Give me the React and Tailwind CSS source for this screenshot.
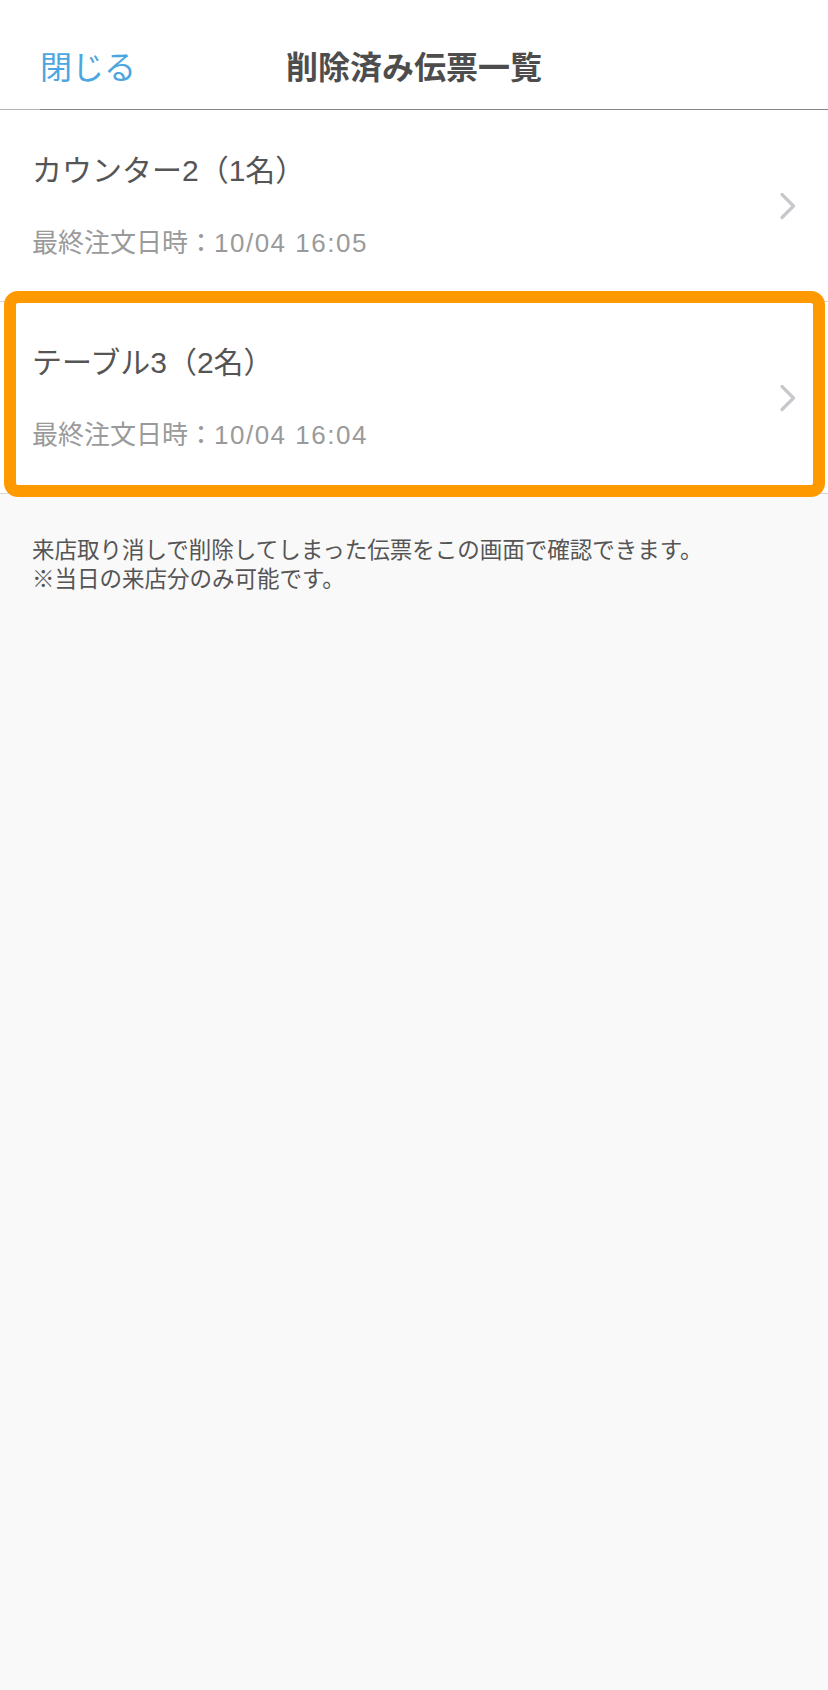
const rows = [
  { id: 1, name: "カウンター2（1名）", last: "10/04 16:05", highlighted: false },
  { id: 2, name: "テーブル3（2名）", last: "10/04 16:04", highlighted: true },
];

function Chevron() {
  return (
    <svg width="18" height="28" viewBox="0 0 18 28" fill="none" className="shrink-0">
      <path d="M3 2.5 L14.5 14 L3 25.5" stroke="#c7c7cc" strokeWidth="3.2" strokeLinecap="round" strokeLinejoin="round" />
    </svg>
  );
}

export default function App() {
  return (
    <div className="min-h-[1690px] bg-[#f9f9f9] font-['Liberation_Sans','Noto_Sans_CJK_JP',sans-serif]">
      <header className="bg-white">
        <div className="grid h-[109px] grid-cols-[1fr_auto_1fr] items-center pb-[10px] pt-[36px]">
          <button type="button" className="justify-self-start pl-[40px] text-[32px] leading-none text-[#4ca6df]">
            閉じる
          </button>
          <h1 className="text-[32px] font-bold leading-none text-[#4d4d4d]">削除済み伝票一覧</h1>
          <span />
        </div>
        <div className="flex h-px">
          <span className="w-[40px] bg-[#b4b4b4]" />
          <span className="flex-1 bg-[#858585]" />
        </div>
      </header>

      <ul className="bg-white">
        {rows.map((row) => (
          <li key={row.id} className="relative flex h-[192px] items-center border-b border-[#d6d6d6] pl-[32px] pr-[31px]">
            <div className="min-w-0 flex-1">
              <p className="text-[30px] leading-[36px] text-[#555555]">{row.name}</p>
              <p className="mt-[38px] text-[26px] leading-[32px] text-[#9a9a9a]">
                最終注文日時：<span className="tracking-[1.5px]">{row.last}</span>
              </p>
            </div>
            <Chevron />
            {row.highlighted && (
              <span className="pointer-events-none absolute -top-[11px] left-[4px] h-[206px] w-[821px] rounded-[14px] border-[12px] border-[#ff9900]" />
            )}
          </li>
        ))}
      </ul>

      <div className="px-[32px] pt-[42px] text-[22.5px] leading-[29px] text-[#555555]">
        <p>来店取り消しで削除してしまった伝票をこの画面で確認できます。</p>
        <p>※当日の来店分のみ可能です。</p>
      </div>
    </div>
  );
}
